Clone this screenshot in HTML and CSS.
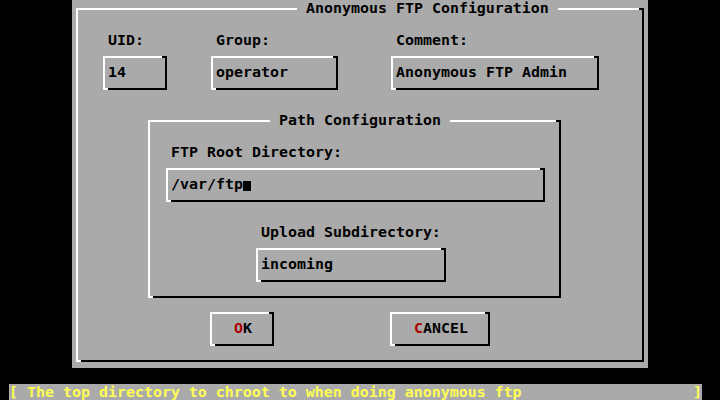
FILE: index.html
```html
<!DOCTYPE html>
<html>
<head>
<meta charset="utf-8">
<link rel="stylesheet" href="styles.css">
</head>
<body>
<div class="screen">
  <div class="dialog">
    <div class="box frame frame-outer">
      <div class="frame-title outer-title"><span>Anonymous FTP Configuration</span></div>
      <div class="fields">
        <div class="field">
          <div class="label">UID:</div>
          <div class="box input w-uid">14</div>
        </div>
        <div class="field">
          <div class="label">Group:</div>
          <div class="box input w-group">operator</div>
        </div>
        <div class="field">
          <div class="label">Comment:</div>
          <div class="box input w-comment">Anonymous FTP Admin</div>
        </div>
      </div>
      <div class="box frame frame-path">
        <div class="frame-title path-title"><span>Path Configuration</span></div>
        <div class="label root-label">FTP Root Directory:</div>
        <div class="box input root-input">/var/ftp<span class="cursor"></span></div>
        <div class="label upload-label">Upload Subdirectory:</div>
        <div class="box input upload-input">incoming</div>
      </div>
      <div class="buttons">
        <div class="box button ok"><span class="hot">O</span>K</div>
        <div class="box button cancel"><span class="hot">C</span>ANCEL</div>
      </div>
    </div>
  </div>
  <div class="status"><span>[ The top directory to chroot to when doing anonymous ftp</span><span>]</span></div>
</div>
</body>
</html>
```
FILE: styles.css
```css
body {
  margin: 0;
  width: 720px;
  height: 400px;
  overflow: hidden;
  background: #000;
  font-family: "DejaVu Sans Mono", "Liberation Mono", monospace;
  font-weight: bold;
  font-size: 14.95px;
  line-height: 16px;
  color: #000;
}

.screen {
  display: flex;
  flex-direction: column;
  height: 400px;
}

.dialog {
  margin-left: 72px;
  width: 576px;
  height: 368px;
  box-sizing: border-box;
  padding: 8px 4px 6px;
  background: #aaaaaa;
  display: flex;
}

.box {
  position: relative;
  box-sizing: border-box;
  border-style: solid;
  border-width: 2px;
  border-color: #fff #000 #000 #fff;
}

.box::before {
  content: "";
  position: absolute;
  top: -2px;
  right: -2px;
  width: 5px;
  height: 2px;
  background: #000;
}

.box::after {
  content: "";
  position: absolute;
  bottom: -2px;
  left: -2px;
  width: 5px;
  height: 2px;
  background: #fff;
}

.frame-outer {
  flex: 1;
}

.frame-title {
  display: flex;
  height: 16px;
  margin-top: -10px;
}

.frame-title span {
  background: #aaaaaa;
  padding: 0 9px;
  white-space: pre;
}

.outer-title {
  padding-left: 219px;
}

.path-title {
  padding-left: 120px;
}

.label {
  height: 16px;
  white-space: pre;
}

.fields {
  display: grid;
  grid-template-columns: 108px 180px 208px;
  margin: 16px 0 0 25px;
}

.field .label {
  padding-left: 5px;
}

.input {
  height: 34px;
  margin-top: 8px;
  padding: 6px 0 8px 3px;
  white-space: pre;
}

.w-uid { width: 64px; }
.w-group { width: 127px; }
.w-comment { width: 208px; }

.frame-path {
  width: 413px;
  height: 178px;
  margin: 30px 0 0 70px;
}

.root-label {
  margin-top: 16px;
  padding-left: 21px;
}

.root-input {
  width: 379px;
  margin-left: 16px;
}

.cursor {
  display: inline-block;
  width: 8px;
  height: 10px;
  background: #000;
  vertical-align: -2px;
}

.upload-label {
  margin-top: 22px;
  padding-left: 111px;
}

.upload-input {
  width: 190px;
  margin-left: 106px;
}

.buttons {
  display: flex;
  gap: 116px;
  margin: 14px 0 0 132px;
}

.button {
  height: 34px;
  padding: 6px 0 8px 22px;
  white-space: pre;
}

.ok { width: 64px; }
.cancel { width: 100px; }

.hot {
  color: #aa0000;
}

.status {
  display: flex;
  justify-content: space-between;
  width: 693px;
  height: 16px;
  margin: 16px 0 0 9px;
  background: #aaaaaa;
  color: #ffff55;
  white-space: pre;
}
```
